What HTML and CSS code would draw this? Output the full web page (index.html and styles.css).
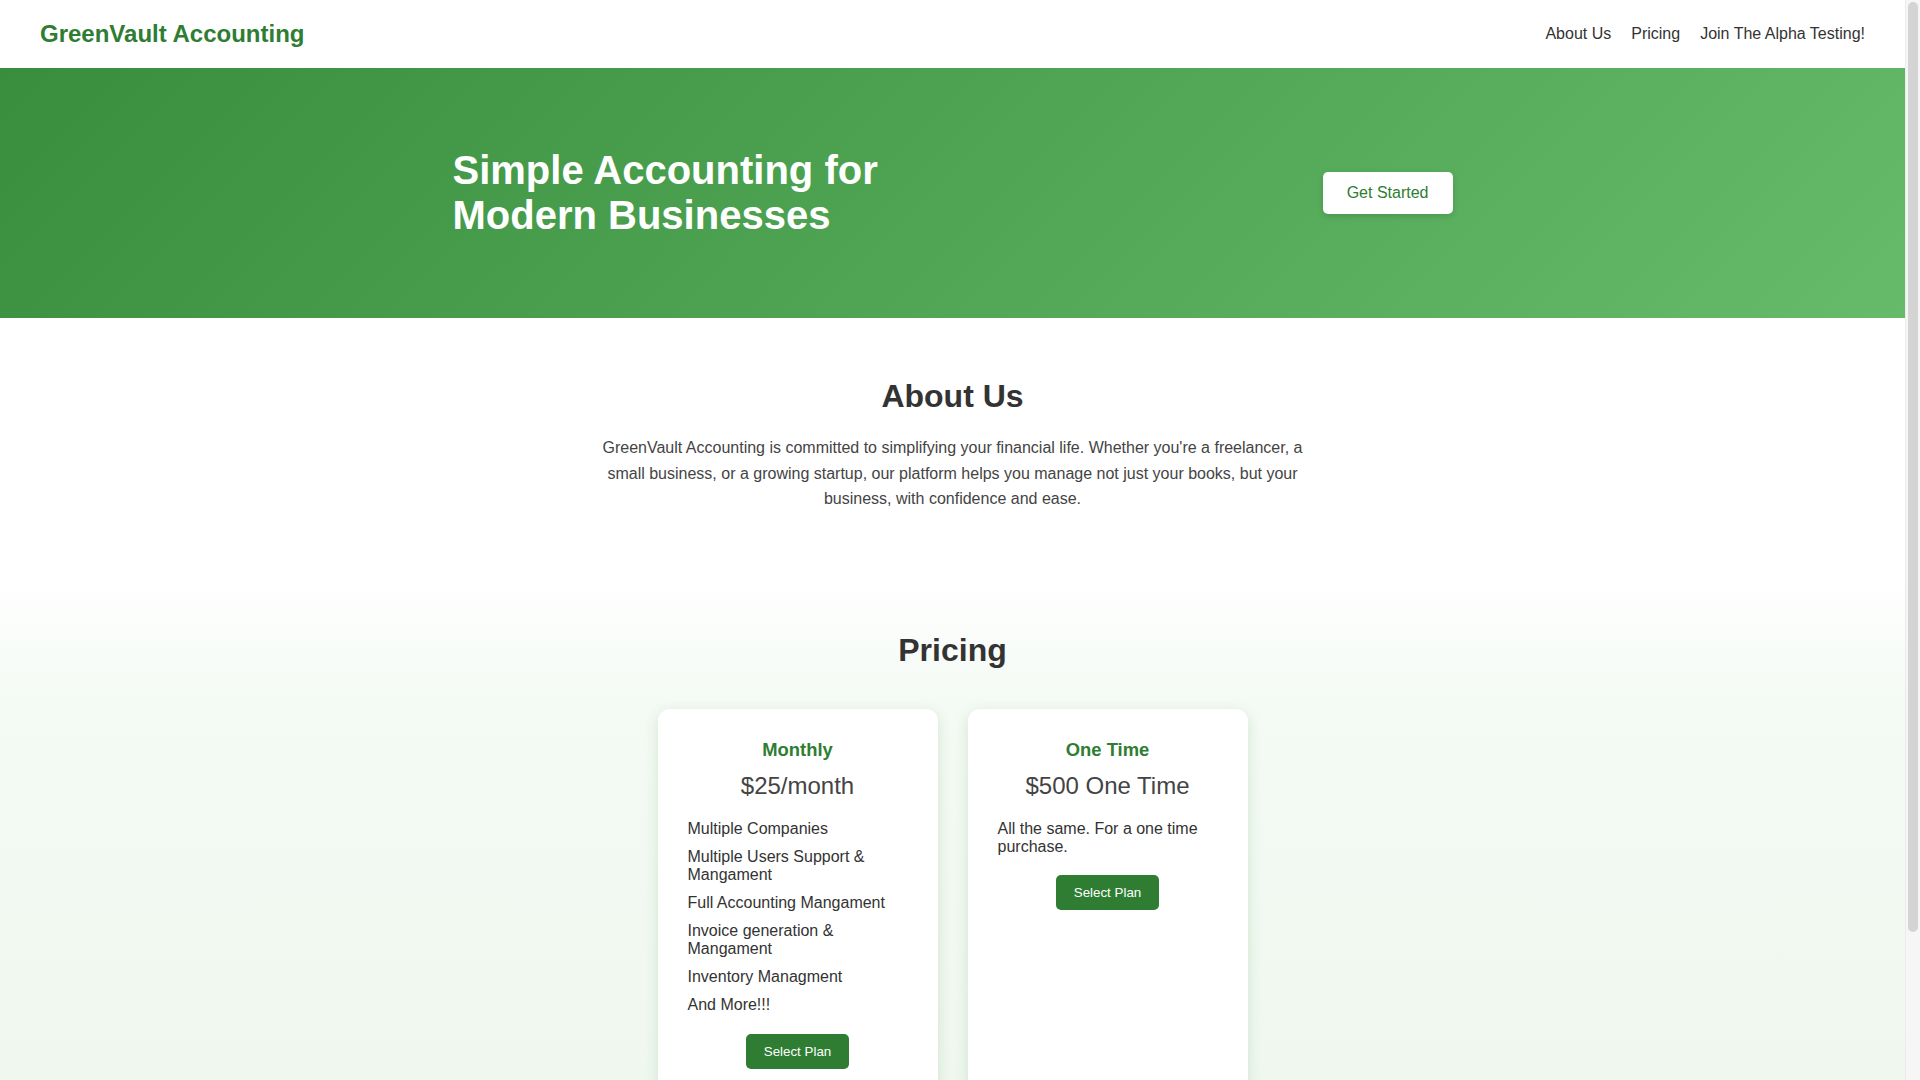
FILE: index.html
```html
<!DOCTYPE html>
<html lang="en">
<head>
<meta charset="utf-8">
<title>GreenVault Accounting</title>
<link rel="stylesheet" href="styles.css">
</head>
<body>
<header class="site-header">
  <div class="logo">GreenVault Accounting</div>
  <nav class="nav">
    <a href="#about">About Us</a>
    <a href="#pricing">Pricing</a>
    <a href="#alpha">Join The Alpha Testing!</a>
  </nav>
</header>

<section class="hero">
  <div class="hero-inner">
    <h1>Simple Accounting for Modern Businesses</h1>
    <a class="btn-light" href="#pricing">Get Started</a>
  </div>
</section>

<section class="about" id="about">
  <h2>About Us</h2>
  <p>GreenVault Accounting is committed to simplifying your financial life. Whether you're a freelancer, a small business, or a growing startup, our platform helps you manage not just your books, but your business, with confidence and ease.</p>
</section>

<section class="pricing" id="pricing">
  <h2>Pricing</h2>
  <div class="plans">
    <div class="card">
      <h3>Monthly</h3>
      <div class="price">$25/month</div>
      <ul class="features">
        <li>Multiple Companies</li>
        <li>Multiple Users Support &amp; Mangament</li>
        <li>Full Accounting Mangament</li>
        <li>Invoice generation &amp; Mangament</li>
        <li>Inventory Managment</li>
        <li>And More!!!</li>
      </ul>
      <div class="card-action"><button class="btn-green">Select Plan</button></div>
    </div>
    <div class="card">
      <h3>One Time</h3>
      <div class="price">$500 One Time</div>
      <p class="desc">All the same. For a one time purchase.</p>
      <div class="card-action"><button class="btn-green">Select Plan</button></div>
    </div>
  </div>
</section>

<div class="fake-scrollbar" aria-hidden="true"><div class="fake-thumb"></div></div>
</body>
</html>
```
FILE: styles.css
```css
* { box-sizing: border-box; }

body {
  margin: 0 15px 0 0;
  font-family: "Liberation Sans", Arial, sans-serif;
  color: #333;
  background: #fff;
}

.site-header {
  display: flex;
  justify-content: space-between;
  align-items: center;
  padding: 20px 40px;
  background: #fff;
}

.logo {
  font-size: 24px;
  font-weight: bold;
  color: #2e7d32;
}

.nav {
  display: flex;
  gap: 20px;
}

.nav a {
  color: #333;
  text-decoration: none;
  font-size: 16px;
}

.hero {
  background: linear-gradient(135deg, #388e3c 0%, #66bb6a 100%);
  color: #fff;
  padding: 80px 0 80px;
}

.hero-inner {
  max-width: 1000px;
  margin: 0 auto;
  display: flex;
  justify-content: space-between;
  align-items: center;
}

.hero h1 {
  margin: 0;
  font-size: 40px;
  max-width: 500px;
  font-weight: bold;
}

.btn-light {
  display: inline-block;
  background: #fff;
  color: #2e7d32;
  text-decoration: none;
  font-size: 16px;
  padding: 12px 24px;
  border-radius: 5px;
  box-shadow: 0 2px 6px rgba(0, 0, 0, 0.15);
}

.about {
  padding: 60px 20px;
  text-align: center;
}

.about h2,
.pricing h2 {
  font-size: 32px;
  margin: 0 0 20px;
  color: #333;
}

.about p {
  max-width: 720px;
  margin: 0 auto;
  font-size: 16px;
  line-height: 1.6;
  color: #444;
}

.pricing {
  padding: 60px 20px;
  text-align: center;
  background: linear-gradient(to bottom, #ffffff 0%, #f4faf4 22%, #eef7ee 100%);
}

.pricing h2 {
  margin-bottom: 40px;
}

.plans {
  display: flex;
  justify-content: center;
  gap: 30px;
}

.card {
  width: 280px;
  background: #fff;
  border-radius: 12px;
  padding: 30px;
  box-shadow: 0 4px 14px rgba(46, 125, 50, 0.16);
}

.card h3 {
  margin: 0 0 11px;
  font-size: 18.4px;
  color: #2e7d32;
}

.price {
  font-size: 24px;
  color: #444;
  margin: 0 0 20px;
}

.features {
  list-style: none;
  padding: 0;
  margin: 0 0 20px;
  text-align: left;
}

.features li {
  font-size: 16px;
  margin: 0 0 10px;
  color: #333;
}

.features li:last-child {
  margin-bottom: 0;
}

.desc {
  margin: 0 0 19px;
  text-align: left;
  font-size: 16px;
  color: #333;
}

.card-action {
  text-align: center;
}

.btn-green {
  background: #2e7d32;
  color: #fff;
  border: none;
  border-radius: 5px;
  font-family: "Liberation Sans", Arial, sans-serif;
  font-size: 13.333px;
  padding: 10px 18px;
  cursor: pointer;
}

.fake-scrollbar {
  position: fixed;
  top: 0;
  right: 0;
  width: 15px;
  height: 100vh;
  background: #f6f6f6;
  border-left: 1px solid #ececec;
  padding: 2px 2px 0 2px;
}

.fake-thumb {
  width: 100%;
  height: 930px;
  background: #d4d4d4;
  border-radius: 5px;
}
```
